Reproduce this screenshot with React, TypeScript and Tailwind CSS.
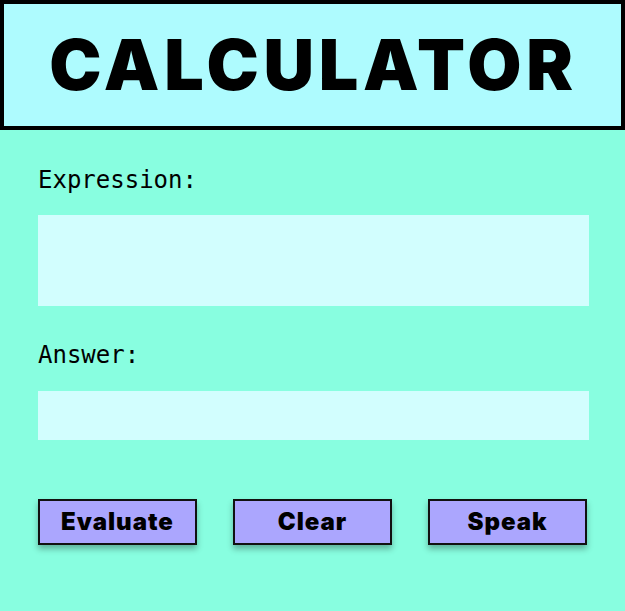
import React from "react";

export default function App() {
  return (
    <div className="w-[625px] h-[611px] bg-[#88fee0] flex flex-col">
      <div className="h-[130px] border-4 border-black bg-[#aefbfe] flex items-center justify-center">
        <h1 className="text-[70px] leading-none font-black text-black tracking-[4.7px] pl-[2px]" style={{ fontFamily: "Inter, 'Liberation Sans', sans-serif" }}>
          CALCULATOR
        </h1>
      </div>
      <div className="flex flex-col pl-[38px] pr-[36px]">
        <label className="mt-[35px] h-[30px] text-[24px] leading-[30px] text-black" style={{ fontFamily: "'DejaVu Sans Mono', monospace" }}>
          Expression:
        </label>
        <div className="mt-[20px] h-[91px] bg-[#d2fefe]" />
        <label className="mt-[34px] h-[30px] text-[24px] leading-[30px] text-black" style={{ fontFamily: "'DejaVu Sans Mono', monospace" }}>
          Answer:
        </label>
        <div className="mt-[21px] h-[49px] bg-[#d2fefe]" />
        <div className="mt-[59px] flex justify-between pr-[2px]">
          {["Evaluate", "Clear", "Speak"].map((t) => (
            <button
              key={t}
              className="w-[159px] h-[46px] bg-[#aba6fe] border-2 border-[#111] shadow-[0_4px_6px_rgba(0,0,0,0.3)] text-[24px] tracking-[1px] font-black text-black"
              style={{ fontFamily: "Inter, 'Liberation Sans', sans-serif" }}
            >
              {t}
            </button>
          ))}
        </div>
      </div>
    </div>
  );
}
